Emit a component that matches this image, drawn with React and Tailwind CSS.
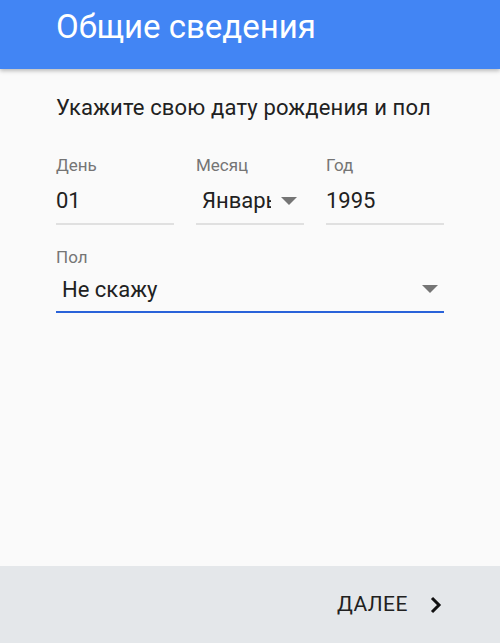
import React from 'react';

function Arrow() {
  return (
    <svg width="16" height="8" viewBox="0 0 16 8" className="shrink-0">
      <path d="M0 0 L16 0 L8 8 Z" fill="#757575" />
    </svg>
  );
}

function Field({ label, value, width, arrow }) {
  return (
    <div className={`flex flex-col min-w-0 shrink-0 ${width}`}>
      <span className="text-[17px] leading-[20px] text-[#757575]">{label}</span>
      <div className={`mt-[12px] flex items-center border-b-2 border-[#e0e0e0] pb-[8px] ${arrow ? 'pl-[6px]' : ''}`}>
        <span className="text-[22px] leading-[28px] text-[#212121] whitespace-nowrap overflow-hidden flex-1 min-w-0">{value}</span>
        {arrow && <div className="ml-[10px] mr-[7px] shrink-0"><Arrow /></div>}
      </div>
    </div>
  );
}

function App() {
  return (
    <div className="w-[500px] h-[643px] bg-[#fafafa] flex flex-col" style={{ fontFamily: 'Roboto, "Noto Sans", sans-serif' }}>
      <div className="h-[69px] bg-[#4285f4] shadow-[0_2px_4px_rgba(0,0,0,0.25)] pl-[56px] flex items-start z-10">
        <h1 className="text-[33px] leading-[38px] pt-[8px] text-white">Общие сведения</h1>
      </div>
      <div className="flex-1 px-[56px] pt-[26px]">
        <p className="text-[22px] leading-[26px] text-[#212121] tracking-[0.15px]">Укажите свою дату рождения и пол</p>
        <div className="mt-[34px] flex gap-[22px]">
          <Field label="День" value="01" width="w-[118px]" />
          <Field label="Месяц" value="Январь" width="w-[108px]" arrow />
          <Field label="Год" value="1995" width="w-[118px]" />
        </div>
        <div className="mt-[22px] flex flex-col">
          <span className="text-[17px] leading-[20px] text-[#757575]">Пол</span>
          <div className="mt-[9px] flex items-center border-b-2 border-[#2962d9] pb-[7px] pl-[6px] pr-[6px]">
            <span className="flex-1 text-[22px] leading-[28px] text-[#212121]">Не скажу</span>
            <div className="-mt-[2px]"><Arrow /></div>
          </div>
        </div>
      </div>
      <div className="h-[77px] bg-[#e4e7ea] flex items-center justify-end pr-[58px]">
        <span className="text-[21px] text-[#212121] tracking-[0.5px]">ДАЛЕЕ</span>
        <svg width="12" height="18" viewBox="0 0 12 18" className="ml-[22px]">
          <path d="M2 2 L9 9 L2 16" fill="none" stroke="#111" strokeWidth="3" />
        </svg>
      </div>
    </div>
  );
}

export default App;
